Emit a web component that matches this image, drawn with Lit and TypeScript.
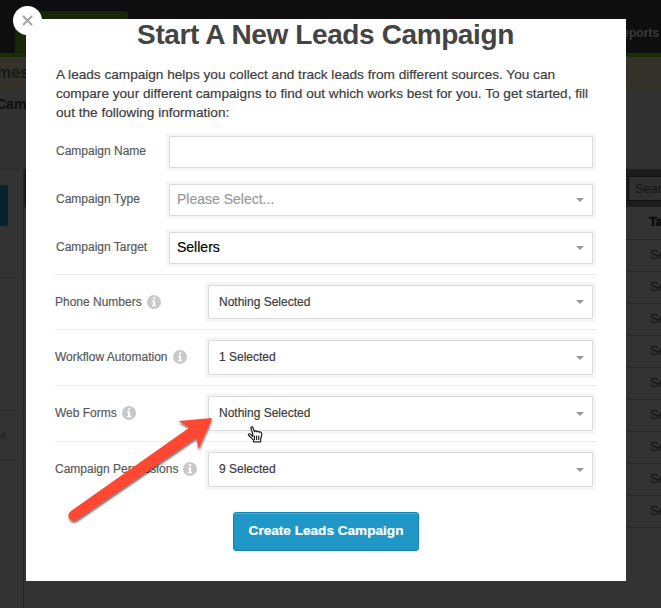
import { LitElement, html, css } from "lit";
import { customElement } from "lit/decorators.js";

@customElement("info-dot")
export class InfoDot extends LitElement {
  static styles = css`
    :host { display: block; width: 14px; height: 14px; }
    svg { display: block; }
  `;
  render() {
    return html`<svg width="14" height="14" viewBox="0 0 14 14">
      <circle cx="7" cy="7" r="7" fill="#c9c9c9" />
      <path fill="#fff" d="M6 2.3h2.1v1.9H6zM5.1 5.4h3v4.5h.9v1.4H5.1V9.900H6V6.800h-.9z" />
    </svg>`;
  }
}

@customElement("pick-box")
export class PickBox extends LitElement {
  static properties = { value: {}, tone: {}, plain: { type: Boolean } };
  declare value: string;
  declare tone: string;
  declare plain: boolean;
  static styles = css`
    :host { display: block; box-sizing: border-box; }
    .box {
      box-sizing: border-box; height: 100%; background: #fff;
      border: 1px solid #dbdbdb; box-shadow: 0 0 0 3px #f6f6f6; border-radius: 1px;
      display: flex; align-items: center; justify-content: space-between;
      padding: 0 8px 0 10px; font-size: 12px; color: #3c3c3c;
    }
    .box span { padding-bottom: 1px; -webkit-text-stroke: 0.2px; }
    .box.hint, .box.solid { font-size: 14px; padding-left: 7px; padding-bottom: 1px; }
    .hint { color: #999; }
    .solid { color: #000; }
    svg { display: block; }
  `;
  render() {
    return html`<div class="box ${this.tone ?? ""}">
      <span>${this.value}</span>
      ${this.plain ? "" : html`<svg width="8" height="4" viewBox="0 0 8 4"><path d="M0 0h8L4 4z" fill="#999" /></svg>`}
    </div>`;
  }
}

@customElement("app-root")
export class AppRoot extends LitElement {
  static styles = css`
    :host {
      display: block; position: relative; width: 661px; height: 608px; overflow: hidden;
      background: #333; font-family: "Liberation Sans", Arial, sans-serif;
    }
    .page { height: 608px; display: flex; flex-direction: column; color: #181818; }
    .top {
      height: 53px; flex: none; background: #0e0e0e; border-bottom: 4px solid #1b2c08;
      display: flex; justify-content: space-between; align-items: flex-end;
    }
    .tab { width: 113px; height: 42px; margin-left: 15px; background: #192607; border-radius: 2px 2px 0 0; }
    .nav { font-weight: 700; font-size: 12px; color: #3a3a3a; line-height: 14px; padding: 0 2px 13px 0; }
    .crumb { height: 32px; flex: none; background: #34322b; font-weight: 700; font-size: 16px; line-height: 32px; text-indent: -3px; }
    .sub { height: 80px; flex: none; background: #313131; font-weight: 700; font-size: 14px; line-height: 31px; color: #0c0c0c; text-indent: -4px; }
    .cols { flex: 1; display: flex; justify-content: space-between; }
    .left { width: 23px; border-right: 1px solid #232323; border-top: 1px solid #292929; display: flex; flex-direction: column; box-sizing: content-box; }
    .cta { width: 8px; height: 41px; margin-top: 15px; background: #06222e; border-radius: 0 2px 2px 0; flex: none; }
    .rule { height: 1px; background: #2d2d2d; flex: none; }
    .gap1 { height: 51px; flex: none; }
    .gap2 { height: 132px; flex: none; }
    .gap3 { height: 49px; flex: none; font-size: 12px; line-height: 49px; color: #242424; }
    .mid { width: 4px; height: 38px; background: #1c1c1c; margin-right: auto; }
    .right { width: 35px; overflow: hidden; }
    .bar { height: 38px; box-sizing: border-box; background: #1c1c1c; padding: 7px 0 6px 2px; }
    .search { height: 25px; box-sizing: border-box; width: 33px; border: 1px solid #121212; border-right: 0; background: #303030; color: #151515; font-size: 13px; line-height: 23px; padding-left: 6px; letter-spacing: -0.2px; }
    .th, .td { box-sizing: border-box; height: 32px; border-bottom: 1px solid #2b2b2b; padding-left: 24px; font-size: 13px; line-height: 30px; white-space: nowrap; letter-spacing: -0.4px; -webkit-text-stroke: 0.3px; }
    .th { font-weight: 700; color: #080808; border-color: #272727; padding-left: 23px; height: 33px; }

    .modal {
      position: absolute; left: 26px; top: 19px; width: 600px; height: 562px;
      background: #fff; box-sizing: border-box; padding: 0 30px 0 29px;
    }
    h1 { margin: 0; font-size: 28px; line-height: 32px; letter-spacing: -0.39px; color: #444; text-align: center; }
    p { margin: 14px 0 0 1px; font-size: 13.62px; line-height: 19px; color: #3d3d3d; white-space: nowrap; -webkit-text-stroke: 0.2px; }
    .row { display: flex; color: #5a5a5a; font-size: 12px; }
    .label { -webkit-text-stroke: 0.2px; }
    .main { height: 32px; margin-bottom: 16px; }
    .main .label { width: 113px; padding-left: 1px; line-height: 30px; }
    .main pick-box { width: 424px; }
    .fields { margin-top: 14px; }
    .extras { margin-top: -6px; width: 541px; }
    .extra { border-top: 1px solid #ececec; height: 56px; box-sizing: border-box; padding-top: 10px; }
    .extra .label { width: 153px; height: 33px; display: flex; align-items: center; gap: 5px; }
    .extra info-dot { margin-top: 1px; }
    .extra pick-box { width: 385px; height: 35px; }
    .extra:first-child { height: 55px; }
    .extra:first-child pick-box { height: 34px; }
    .go {
      display: flex; justify-content: center; width: 186px; height: 39px; box-sizing: border-box;
      margin: 15px auto 0 178px; background: #1f97c7; border: 1px solid #1583b0; border-radius: 3px;
      box-shadow: inset 0 1px 0 #4cb0d8; color: #fff; font: 700 13.6px/35px "Liberation Sans", Arial, sans-serif; padding: 0;
      -webkit-text-stroke: 0.2px;
    }
    .close {
      position: absolute; left: 13px; top: 6px; width: 29px; height: 29px; border-radius: 50%;
      background: #fff; display: flex; align-items: center; justify-content: center;
    }
    .over { position: absolute; left: 0; top: 0; pointer-events: none; }
  `;

  private mains = [
    { label: "Campaign Name", value: "", tone: "", plain: true },
    { label: "Campaign Type", value: "Please Select...", tone: "hint", plain: false },
    { label: "Campaign Target", value: "Sellers", tone: "solid", plain: false },
  ];
  private extras = [
    { label: "Phone Numbers", value: "Nothing Selected" },
    { label: "Workflow Automation", value: "1 Selected" },
    { label: "Web Forms", value: "Nothing Selected" },
    { label: "Campaign Permissions", value: "9 Selected" },
  ];

  render() {
    return html`
      <div class="page">
        <div class="top"><div class="tab"></div><div class="nav">eports</div></div>
        <div class="crumb">mes</div>
        <div class="sub">Camp</div>
        <div class="cols">
          <div class="left">
            <div class="cta"></div><div class="gap1"></div><div class="rule"></div>
            <div class="gap2"></div><div class="rule"></div><div class="gap3">e</div><div class="rule"></div>
          </div>
          <div class="mid"></div>
          <div class="right">
            <div class="bar"><div class="search">Sear</div></div>
            <div class="th">Ta</div>
            ${Array.from({ length: 9 }, () => html`<div class="td">Se</div>`)}
          </div>
        </div>
      </div>
      <div class="modal">
        <h1>Start A New Leads Campaign</h1>
        <p>A leads campaign helps you collect and track leads from different sources. You can<br />compare your different campaigns to find out which works best for you. To get started, fill<br />out the following information:</p>
        <div class="fields">
          ${this.mains.map((m) => html`<div class="row main"><div class="label">${m.label}</div>
            <pick-box .value=${m.value} .tone=${m.tone} .plain=${m.plain}></pick-box></div>`)}
        </div>
        <div class="extras">
          ${this.extras.map((m) => html`<div class="row extra"><div class="label">${m.label}<info-dot></info-dot></div>
            <pick-box .value=${m.value}></pick-box></div>`)}
        </div>
        <button class="go">Create Leads Campaign</button>
      </div>
      <div class="close">
        <svg width="11" height="11" viewBox="0 0 11 11"><path d="M1 1l9 9M10 1l-9 9" stroke="#a6a6a6" stroke-width="2.3" /></svg>
      </div>
      <svg class="over" width="661" height="608" viewBox="0 0 661 608">
        <defs><filter id="sh" x="-10%" y="-10%" width="120%" height="125%"><feDropShadow dx="0.5" dy="2" stdDeviation="0.9" flood-color="#000" flood-opacity="0.6" /></filter></defs>
        <path filter="url(#sh)" fill="#ff4632" d="M212 418L178.500 421L189.500 427.500L71 511A5 5 0 0 0 76.500 520L196.500 437.500L198.500 449Z" />
        <path transform="translate(247.500 426)" fill="#fff" stroke="#222" stroke-width="1.2" stroke-linejoin="round" stroke-linecap="round"
          d="M5.400 8.500L3.500 2.300C3.100.900 4.800.200 5.400 1.500L7 5.800C7.300 4.600 9 4.500 9.400 5.900C10 4.900 11.500 5.100 11.700 6.300C12.500 5.500 14 6 14.100 7.500C14.400 9.500 13.800 11.200 13.200 12.600V15.800H6V14.200L1.300 9.500C.300 8.500 1.400 7.300 2.700 8L5.400 10.500ZM7 10v3.500M9.100 10v3.500M11.200 10v3.500" />
      </svg>
    `;
  }
}
